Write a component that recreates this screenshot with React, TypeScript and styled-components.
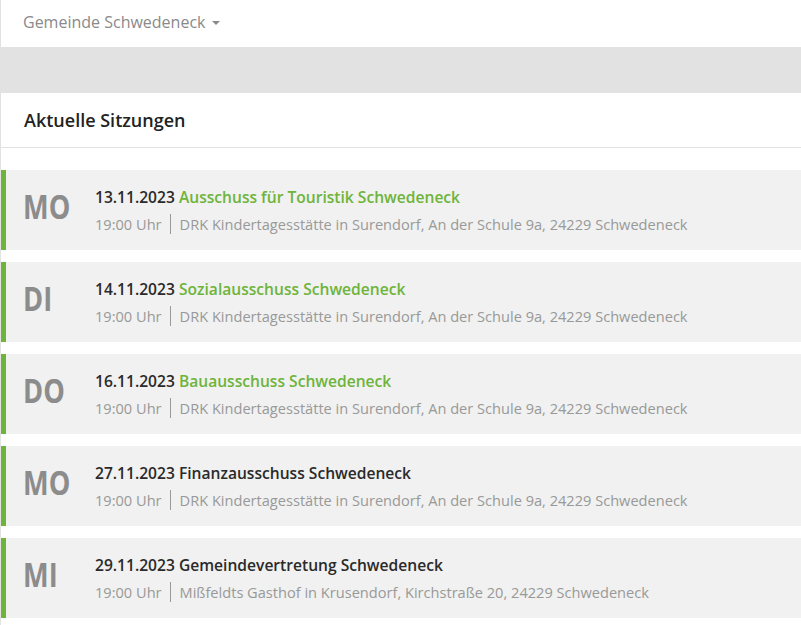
import React from 'react';
import styled, { createGlobalStyle } from 'styled-components';

const GlobalStyle = createGlobalStyle`
	html, body {
		margin: 0;
		padding: 0;
		background: #fff;
		font-family: "Open Sans", "Liberation Sans", sans-serif;
	}
`;

const Page = styled.div`
	width: 801px;
	min-height: 625px;
	border-left: 1px solid #e2e2e2;
	box-sizing: border-box;
`;

const TopBar = styled.div`
	height: 47px;
	box-sizing: border-box;
	padding: 0 0 4px 22px;
	display: flex;
	align-items: center;
	font-size: 16px;
	color: #8a8a8a;
`;

const Caret = styled.span`
	display: inline-block;
	margin-left: 7px;
	margin-top: 2px;
	border-left: 4px solid transparent;
	border-right: 4px solid transparent;
	border-top: 4px solid #8a8a8a;
`;

const Band = styled.div`
	height: 46px;
	background: #e2e2e2;
	margin-left: -1px;
`;

const Heading = styled.h2`
	margin: 0;
	height: 54px;
	display: flex;
	align-items: center;
	padding-left: 23px;
	font-size: 18px;
	font-weight: 600;
	color: #222;
	border-bottom: 1px solid #e2e2e2;
`;

const List = styled.div`
	display: flex;
	flex-direction: column;
	gap: 12px;
	padding-top: 22px;
`;

const Card = styled.div`
	height: 80px;
	display: flex;
	align-items: center;
	background: #f0f1f0;
	border-left: 5px solid #6eb43a;
`;

const Day = styled.div`
	width: 88px;
	flex-shrink: 0;
	padding-left: 17px;
	margin-top: -9px;
	box-sizing: border-box;
`;

const DayText = styled.span`
	display: inline-block;
	font-weight: 700;
	font-size: 34px;
	color: #8c8c8c;
	transform: scaleX(0.8);
	transform-origin: left center;
`;

const Info = styled.div`
	display: flex;
	flex-direction: column;
	gap: 6px;
	margin-left: 1px;
`;

const Title = styled.div`
	font-size: 15.6px;
	font-weight: 600;
	color: #2a2a2a;
`;

const Name = styled.span<{ $link: boolean }>`
	color: ${(p) => (p.$link ? '#6eb43a' : '#2a2a2a')};
`;

const Meta = styled.div`
	display: flex;
	align-items: center;
	font-size: 14.6px;
	color: #999;
`;

const Sep = styled.span`
	width: 1px;
	height: 20px;
	background: #999;
	margin: 0 9px 0 8px;
`;

const sessions = [
	{ day: 'MO', date: '13.11.2023', name: 'Ausschuss für Touristik Schwedeneck', link: true, place: 'DRK Kindertagesstätte in Surendorf, An der Schule 9a, 24229 Schwedeneck' },
	{ day: 'DI', date: '14.11.2023', name: 'Sozialausschuss Schwedeneck', link: true, place: 'DRK Kindertagesstätte in Surendorf, An der Schule 9a, 24229 Schwedeneck' },
	{ day: 'DO', date: '16.11.2023', name: 'Bauausschuss Schwedeneck', link: true, place: 'DRK Kindertagesstätte in Surendorf, An der Schule 9a, 24229 Schwedeneck' },
	{ day: 'MO', date: '27.11.2023', name: 'Finanzausschuss Schwedeneck', link: false, place: 'DRK Kindertagesstätte in Surendorf, An der Schule 9a, 24229 Schwedeneck' },
	{ day: 'MI', date: '29.11.2023', name: 'Gemeindevertretung Schwedeneck', link: false, place: 'Mißfeldts Gasthof in Krusendorf, Kirchstraße 20, 24229 Schwedeneck' },
];

export default function App() {
	return (
		<>
			<GlobalStyle />
			<Page>
				<TopBar>
					Gemeinde Schwedeneck
					<Caret />
				</TopBar>
				<Band />
				<Heading>Aktuelle Sitzungen</Heading>
				<List>
					{sessions.map((s, i) => (
						<Card key={i}>
							<Day>
								<DayText>{s.day}</DayText>
							</Day>
							<Info>
								<Title>
									{s.date} <Name $link={s.link}>{s.name}</Name>
								</Title>
								<Meta>
									19:00 Uhr
									<Sep />
									{s.place}
								</Meta>
							</Info>
						</Card>
					))}
				</List>
			</Page>
		</>
	);
}
